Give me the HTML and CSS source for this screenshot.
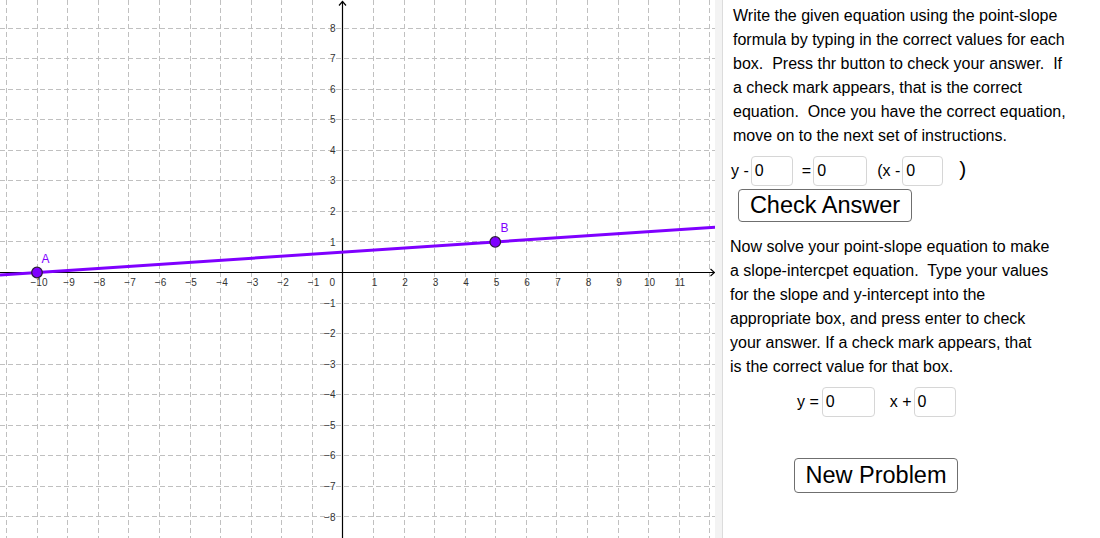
FILE: index.html
```html
<!DOCTYPE html>
<html>
<head>
<meta charset="utf-8">
<link rel="stylesheet" href="styles.css">
</head>
<body>
<div class="app">
  <svg class="graph" width="715" height="538" viewBox="0 0 715 538" xmlns="http://www.w3.org/2000/svg">
    <g class="grid">
      <line x1="6.5" y1="0" x2="6.5" y2="538"/>
      <line x1="37.5" y1="0" x2="37.5" y2="538"/>
      <line x1="67.5" y1="0" x2="67.5" y2="538"/>
      <line x1="98.5" y1="0" x2="98.5" y2="538"/>
      <line x1="128.5" y1="0" x2="128.5" y2="538"/>
      <line x1="159.5" y1="0" x2="159.5" y2="538"/>
      <line x1="190.5" y1="0" x2="190.5" y2="538"/>
      <line x1="220.5" y1="0" x2="220.5" y2="538"/>
      <line x1="251.5" y1="0" x2="251.5" y2="538"/>
      <line x1="281.5" y1="0" x2="281.5" y2="538"/>
      <line x1="312.5" y1="0" x2="312.5" y2="538"/>
      <line x1="373.5" y1="0" x2="373.5" y2="538"/>
      <line x1="404.5" y1="0" x2="404.5" y2="538"/>
      <line x1="434.5" y1="0" x2="434.5" y2="538"/>
      <line x1="465.5" y1="0" x2="465.5" y2="538"/>
      <line x1="495.5" y1="0" x2="495.5" y2="538"/>
      <line x1="526.5" y1="0" x2="526.5" y2="538"/>
      <line x1="556.5" y1="0" x2="556.5" y2="538"/>
      <line x1="587.5" y1="0" x2="587.5" y2="538"/>
      <line x1="618.5" y1="0" x2="618.5" y2="538"/>
      <line x1="648.5" y1="0" x2="648.5" y2="538"/>
      <line x1="679.5" y1="0" x2="679.5" y2="538"/>
      <line x1="709.5" y1="0" x2="709.5" y2="538"/>
      <line x1="0" y1="28.5" x2="715" y2="28.5"/>
      <line x1="0" y1="58.5" x2="715" y2="58.5"/>
      <line x1="0" y1="89.5" x2="715" y2="89.5"/>
      <line x1="0" y1="119.5" x2="715" y2="119.5"/>
      <line x1="0" y1="150.5" x2="715" y2="150.5"/>
      <line x1="0" y1="180.5" x2="715" y2="180.5"/>
      <line x1="0" y1="211.5" x2="715" y2="211.5"/>
      <line x1="0" y1="241.5" x2="715" y2="241.5"/>
      <line x1="0" y1="303.5" x2="715" y2="303.5"/>
      <line x1="0" y1="333.5" x2="715" y2="333.5"/>
      <line x1="0" y1="364.5" x2="715" y2="364.5"/>
      <line x1="0" y1="394.5" x2="715" y2="394.5"/>
      <line x1="0" y1="425.5" x2="715" y2="425.5"/>
      <line x1="0" y1="455.5" x2="715" y2="455.5"/>
      <line x1="0" y1="486.5" x2="715" y2="486.5"/>
      <line x1="0" y1="516.5" x2="715" y2="516.5"/>
    </g>
    <g class="axis">
      <line x1="342.5" y1="1.5" x2="342.5" y2="538"/>
      <line x1="0" y1="272.5" x2="714.5" y2="272.5"/>
      <polyline points="339,5.5 342.5,1.5 346,5.5"/>
      <polyline points="710.5,269 714.5,272.5 710.5,276"/>
    </g>
    <g class="ticks xt">
      <text x="39" y="286">−10</text>
      <text x="69" y="286">−9</text>
      <text x="99.5" y="286">−8</text>
      <text x="130" y="286">−7</text>
      <text x="160.5" y="286">−6</text>
      <text x="191" y="286">−5</text>
      <text x="222" y="286">−4</text>
      <text x="252.5" y="286">−3</text>
      <text x="283" y="286">−2</text>
      <text x="313.5" y="286">−1</text>
      <text x="374.5" y="286">1</text>
      <text x="405" y="286">2</text>
      <text x="435.5" y="286">3</text>
      <text x="466" y="286">4</text>
      <text x="496.5" y="286">5</text>
      <text x="527" y="286">6</text>
      <text x="558" y="286">7</text>
      <text x="588.5" y="286">8</text>
      <text x="619" y="286">9</text>
      <text x="649.5" y="286">10</text>
      <text x="680" y="286">11</text>
    </g>
    <g class="ticks yt">
      <text x="335" y="286">0</text>
      <text x="335.5" y="32">8</text>
      <text x="335.5" y="62.2">7</text>
      <text x="335.5" y="92.8">6</text>
      <text x="335.5" y="123.3">5</text>
      <text x="335.5" y="153.9">4</text>
      <text x="335.5" y="184.4">3</text>
      <text x="335.5" y="215">2</text>
      <text x="335.5" y="245.5">1</text>
      <text x="335.5" y="306.6">−1</text>
      <text x="335.5" y="337.2">−2</text>
      <text x="335.5" y="367.7">−3</text>
      <text x="335.5" y="398.3">−4</text>
      <text x="335.5" y="428.8">−5</text>
      <text x="335.5" y="459.4">−6</text>
      <text x="335.5" y="489.9">−7</text>
      <text x="335.5" y="520.5">−8</text>
    </g>
    <line class="fline" x1="0" y1="274.97" x2="715" y2="227.3"/>
    <circle class="pt" cx="37" cy="272.5" r="5.3"/>
    <circle class="pt" cx="495.25" cy="241.95" r="5.3"/>
    <text class="plabel" x="41.5" y="262.5">A</text>
    <text class="plabel" x="500.5" y="231.5">B</text>
  </svg>
  <div class="divider"></div>
  <div class="panel">
    <p class="text t1">Write the given equation using the point-slope<br>formula by typing in the correct values for each<br>box.&nbsp; Press thr button to check your answer.&nbsp; If<br>a check mark appears, that is the correct<br>equation.&nbsp; Once you have the correct equation,<br>move on to the next set of instructions.</p>
    <div class="row r1">
      <span class="lbl">y -</span>
      <span class="box b1">0</span>
      <span class="lbl l2">=</span>
      <span class="box b2">0</span>
      <span class="lbl l3">(x -</span>
      <span class="box b3">0</span>
      <span class="paren">)</span>
    </div>
    <button class="btn check">Check Answer</button>
    <p class="text t2">Now solve your point-slope equation to make<br>a slope-intercpet equation.&nbsp; Type your values<br>for the slope and y-intercept into the<br>appropriate box, and press enter to check<br>your answer. If a check mark appears, that<br>is the correct value for that box.</p>
    <div class="row r2">
      <span class="lbl">y =</span>
      <span class="box b4">0</span>
      <span class="lbl l5">x +</span>
      <span class="box b5">0</span>
    </div>
    <button class="btn newp">New Problem</button>
  </div>
</div>
</body>
</html>
```
FILE: styles.css
```css
html, body {
  margin: 0;
  padding: 0;
  background: #ffffff;
}
body {
  width: 1100px;
  height: 538px;
  overflow: hidden;
  font-family: "Liberation Sans", Arial, sans-serif;
  color: #000;
}
.app {
  display: flex;
  width: 1100px;
  height: 538px;
}
.graph {
  display: block;
  flex: none;
  background: #fff;
}
.grid line {
  stroke: #c0c0c0;
  stroke-width: 1;
  stroke-dasharray: 5 3;
}
.axis line,
.axis polyline {
  stroke: #000;
  stroke-width: 1.2;
  fill: none;
}
.ticks text {
  font-family: "Liberation Sans", Arial, sans-serif;
  font-size: 10px;
  fill: #333;
}
.xt text { text-anchor: middle; }
.yt text { text-anchor: end; }
.fline {
  stroke: #7f00ff;
  stroke-width: 3;
}
.pt {
  fill: #7f00ff;
  stroke: #2a1a3a;
  stroke-width: 1.2;
}
.plabel {
  font-family: "Liberation Sans", Arial, sans-serif;
  font-size: 12px;
  fill: #7f00ff;
}
.divider {
  flex: none;
  width: 7px;
  height: 538px;
  background: #f3f3f3;
  border-right: 1px solid #dcdcdc;
}
.panel {
  flex: 1;
  display: flex;
  flex-direction: column;
  align-items: flex-start;
}
.text {
  margin: 0;
  font-size: 16px;
  line-height: 24px;
  white-space: nowrap;
}
.t1 { margin: 4px 0 0 10px; }
.t2 { margin: 13px 0 0 7px; }
.row {
  display: flex;
  align-items: center;
  height: 30px;
  font-size: 16px;
}
.r1 { margin: 8px 0 0 8px; }
.r2 { margin: 8px 0 0 74px; }
.box {
  box-sizing: border-box;
  height: 30px;
  border: 1px solid #d6d6d6;
  border-radius: 4px;
  background: #fff;
  padding-left: 3px;
  line-height: 28px;
  font-size: 16px;
}
.b1 { width: 42px; margin-left: 2px; }
.l2 { margin-left: 9px; }
.b2 { width: 54px; margin-left: 2px; }
.l3 { margin-left: 10px; }
.b3 { width: 41px; margin-left: 2px; }
.paren { font-size: 21px; margin-left: 16px; margin-top: -4px; }
.b4 { width: 53px; margin-left: 3px; }
.l5 { margin-left: 15px; }
.b5 { width: 42px; margin-left: 2px; }
.btn {
  box-sizing: border-box;
  font-family: "Liberation Sans", Arial, sans-serif;
  font-size: 23.5px;
  color: #000;
  background: #fff;
  border: 1px solid #6f6f6f;
  border-radius: 4px;
  padding: 0;
  text-align: center;
}
.check {
  width: 174px;
  height: 33px;
  margin: 3px 0 0 15px;
}
.newp {
  width: 164px;
  height: 35px;
  margin: 41px 0 0 71px;
}
```
